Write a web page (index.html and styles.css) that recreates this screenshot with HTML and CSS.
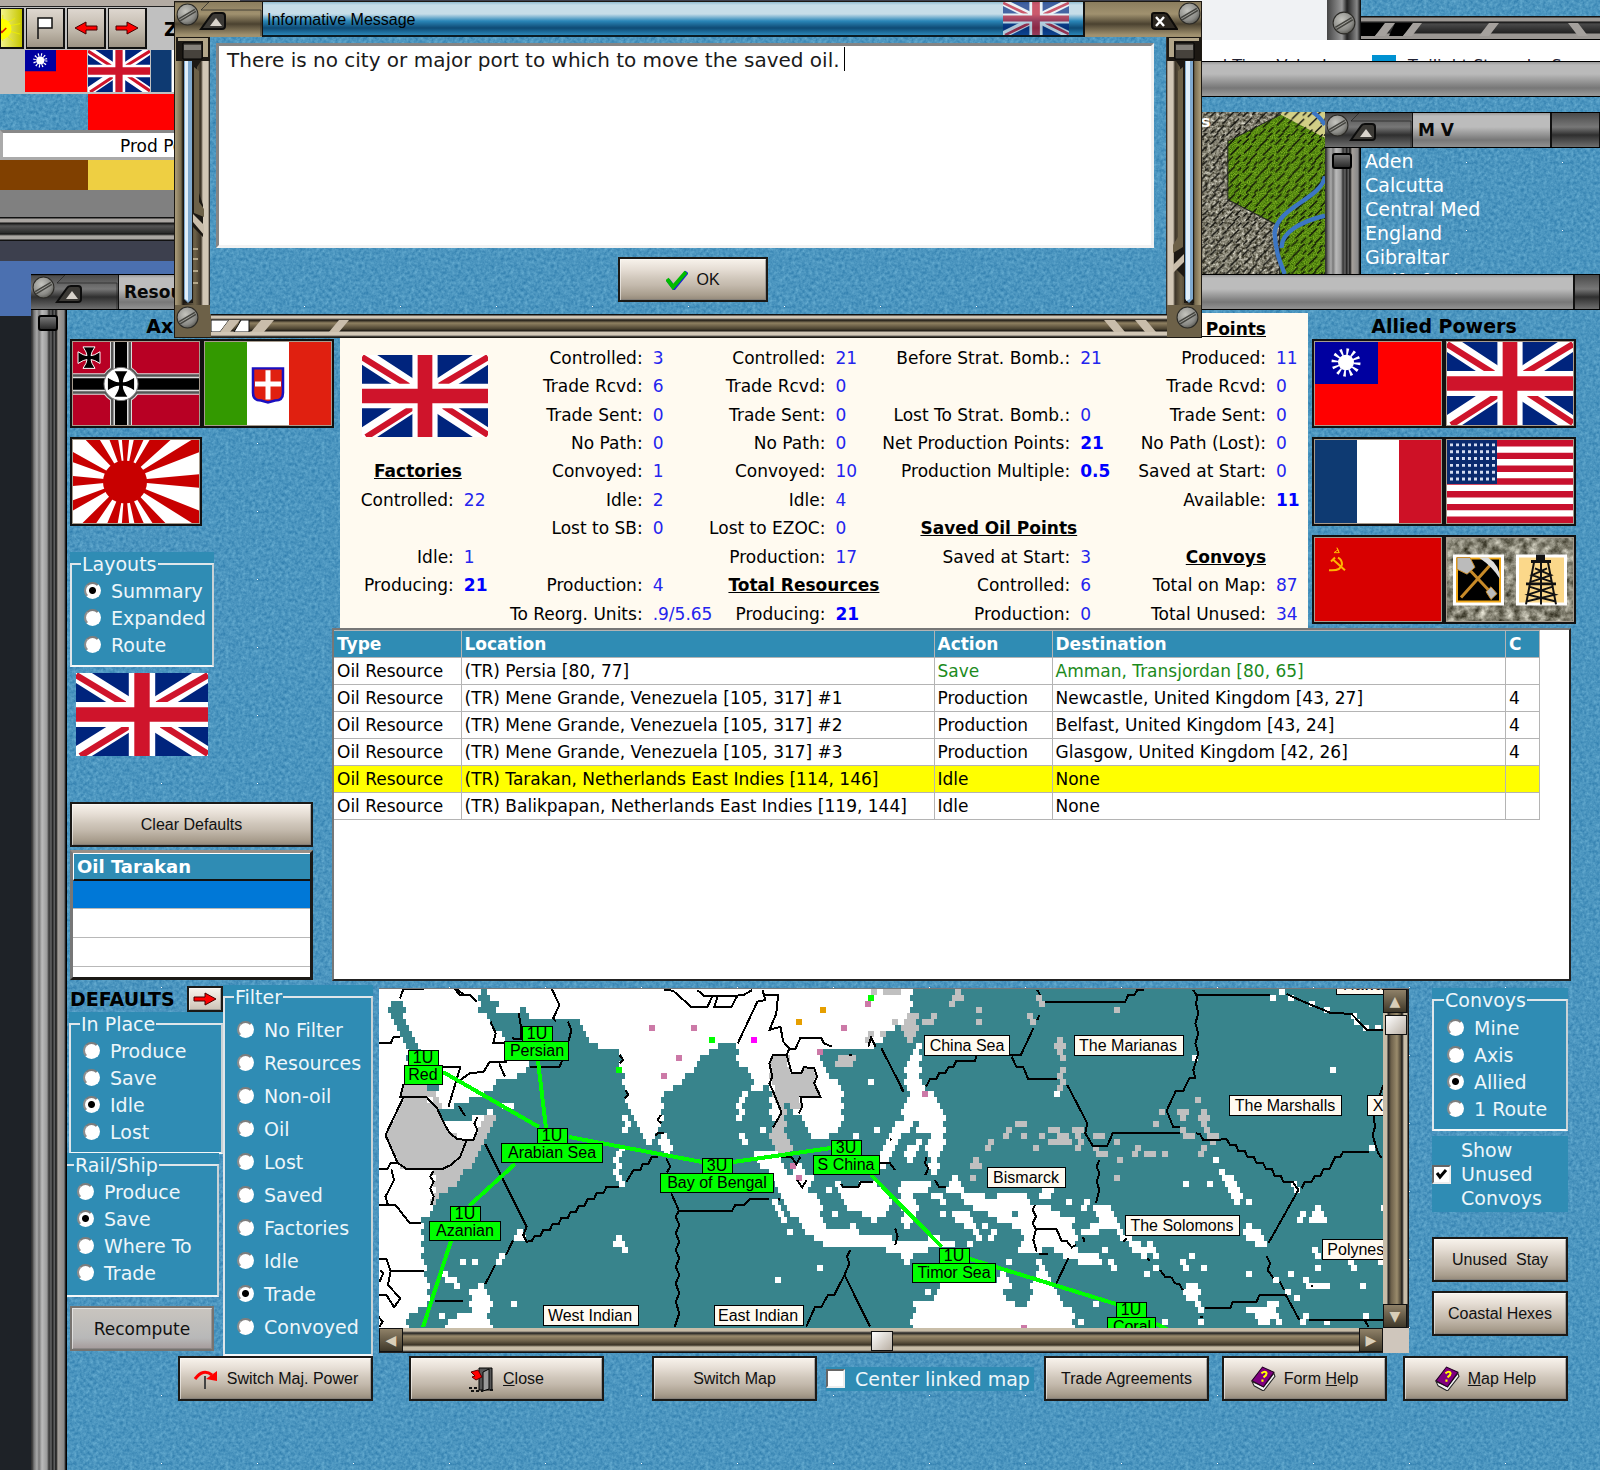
FILE: index.html
```html
<!DOCTYPE html>
<html lang="en">
<head>
<meta charset="utf-8">
<title>Resources and Production</title>
<link rel="stylesheet" href="styles.css">
</head>
<body>
<svg class="defs" width="0" height="0" aria-hidden="true">
  <defs>
    <radialGradient id="screwFill" cx=".4" cy=".35" r=".7"><stop offset="0" stop-color="#c4c4be"/><stop offset=".7" stop-color="#8a8a86"/><stop offset="1" stop-color="#55554f"/></radialGradient>
    <filter id="stone" x="0" y="0" width="100%" height="100%" color-interpolation-filters="sRGB"><feTurbulence type="fractalNoise" baseFrequency=".12" numOctaves="4"/><feColorMatrix values="1 0 0 0 .02  1 0 0 0 .01  1 0 0 0 -.05  0 0 0 0 1"/></filter>
    <filter id="grass" x="0" y="0" width="100%" height="100%" color-interpolation-filters="sRGB"><feTurbulence type="fractalNoise" baseFrequency=".3" numOctaves="3" result="n"/><feColorMatrix values=".5 0 0 0 .1  .5 0 0 0 .3  .2 0 0 0 -.03  0 0 0 0 1"/><feComposite in2="SourceGraphic" operator="in"/></filter>
    <pattern id="hatch" width="97" height="83" patternUnits="userSpaceOnUse"><path d="M2 20L20 2M30 14L42 2M52 26L76 2M84 16L95 5M6 46L30 22M40 40L52 28M62 52L88 26M4 70L16 58M24 66L44 46M50 76L70 56M78 66L94 50M12 82L26 68M36 82L46 72M74 82L90 68" stroke="#0b0b08" stroke-width="4"/></pattern>
    <symbol id="screw" viewBox="0 0 22 22"><circle cx="11" cy="11" r="10" fill="url(#screwFill)" stroke="#2b2a26"/><path d="M3 15L18 6M4 17L19 8" stroke="#44443f" stroke-width="1.4"/></symbol>
    <symbol id="cap" viewBox="0 0 88 35"><path d="M0 0H34L26 8H86V34" fill="none" stroke="#222" stroke-width="1" opacity=".7"/><use href="#screw" x="1" y="1" width="23" height="23"/><path d="M26 27L36 13Q37 11 40 11H47Q50 11 50 14V24Q50 27 47 27Z" fill="#3c3a36" stroke="#0c0c0c" stroke-width="2"/><path d="M35 24L41 16L47 24Z" fill="#d9d4cc"/></symbol>
    <symbol id="uk" viewBox="0 0 60 40" preserveAspectRatio="none"><path fill="#00247d" d="M0 0H60V40H0z"/><path d="M0 0L60 40M60 0L0 40" stroke="#fff" stroke-width="8"/><path d="M0 1L22 15M60 1L37 15M2 40L25 25M39 25L60 39" stroke="#cf142b" stroke-width="3"/><path d="M30 0V40M0 20H60" stroke="#fff" stroke-width="12"/><path d="M30 0V40M0 20H60" stroke="#cf142b" stroke-width="7"/></symbol>
    <symbol id="china" viewBox="0 0 126 85" preserveAspectRatio="none"><path fill="#f00" d="M0 0H126V85H0z"/><path fill="#0000a0" d="M0 0H63V43H0z"/><circle cx="31" cy="21" r="11" fill="none" stroke="#fff" stroke-width="7" stroke-dasharray="2.2 3.56"/><circle cx="31" cy="21" r="8" fill="#fff"/></symbol>
    <symbol id="france" viewBox="0 0 126 85" preserveAspectRatio="none"><path fill="#0e3a72" d="M0 0H42V85H0z"/><path fill="#fff" d="M42 0H84V85H42z"/><path fill="#ce1126" d="M84 0H126V85H84z"/></symbol>
    <symbol id="italy" viewBox="0 0 126 85" preserveAspectRatio="none"><path fill="#339900" d="M0 0H42V85H0z"/><path fill="#fff" d="M42 0H84V85H42z"/><path fill="#e02010" d="M84 0H126V85H84z"/><path d="M48 27H78V52Q78 60 70 60L63 62L56 60Q48 60 48 52Z" fill="#e02010" stroke="#1a0fc0" stroke-width="2.5"/><path d="M63 29V59M50 43H76" stroke="#fff" stroke-width="5"/></symbol>
    <symbol id="cross" viewBox="-12 -12 24 24"><path d="M-6 -11H6Q2 -5 2 -2Q5 -2 11 -6V6Q5 2 2 2Q2 5 6 11H-6Q-2 5 -2 2Q-5 2 -11 6V-6Q-5 -2 -2 -2Q-2 -5 -6 -11Z" fill="#000" stroke="#fff" stroke-width="1"/></symbol>
    <symbol id="germany" viewBox="0 0 126 85" preserveAspectRatio="none"><path fill="#b80024" d="M0 0H126V85H0z"/><path d="M48 0V85M0 43H126" stroke="#ddd" stroke-width="22"/><circle cx="48" cy="43" r="20" fill="#ddd"/><path d="M48 0V85M0 43H126" stroke="#555" stroke-width="20"/><circle cx="48" cy="43" r="19" fill="#555"/><path d="M48 0V85M0 43H126" stroke="#ddd" stroke-width="15"/><path d="M48 0V85M0 43H126" stroke="#000" stroke-width="12"/><circle cx="48" cy="43" r="17" fill="#fff" stroke="#777"/><use href="#cross" x="33" y="28" width="30" height="30"/><use href="#cross" x="4" y="4" width="24" height="24"/></symbol>
    <symbol id="japan" viewBox="0 0 126 85" preserveAspectRatio="none"><path fill="#fff" d="M0 0H126V85H0z"/><g fill="#c80000"><path d="M52 42L-50 52V32ZM52 42L-48 5V-15ZM52 42L-20 -35L0 -45ZM52 42L20 -45H38ZM52 42L46 -40H60ZM52 42L69 -40H88ZM52 42L100 -40L130 -30ZM52 42L150 -20V3ZM52 42L160 32V52ZM52 42L150 82V105ZM52 42L105 125H130ZM52 42L70 125H88ZM52 42L46 125H60ZM52 42L18 125H38ZM52 42L-25 120H0ZM52 42L-48 100V80Z"/><circle cx="52" cy="43" r="22"/></g></symbol>
    <symbol id="usa" viewBox="0 0 126 85" preserveAspectRatio="none"><path fill="#fff" d="M0 0H126V85H0z"/><path d="M0 3.3H126M0 16.3H126M0 29.4H126M0 42.5H126M0 55.6H126M0 68.7H126M0 81.7H126" stroke="#c8102e" stroke-width="6.5"/><path fill="#0a2a6e" d="M0 0H50V45H0z"/><path d="M3 5H49M3 12H49M3 19H49M3 26H49M3 33H49M3 40H49" stroke="#d4dcf0" stroke-width="3" stroke-dasharray="3 3"/></symbol>
    <symbol id="ussr" viewBox="0 0 126 85" preserveAspectRatio="none"><path fill="#d80000" d="M0 0H126V85H0z"/><g fill="none" stroke="#ffb400" stroke-width="2"><path d="M14 33Q26 34 27 27Q27 22 23 20M16 24L20 20M18 22L30 33"/><path d="M22 10L24 15H19L23 12L24 15Z" stroke-width="1"/></g></symbol>
    <symbol id="minor" viewBox="0 0 126 85" preserveAspectRatio="none"><path d="M0 0H126V85H0z" filter="url(#stone)"/><path fill="#fff" d="M6 17H57V69H6zM69 17H120V69H69z"/><path fill="#000" stroke="#f0a818" stroke-width="2" d="M10 21H53V65H10z"/><path d="M14 61L43 28M22 32L46 58" stroke="#c88a28" stroke-width="3"/><path d="M39 55L44 50L50 57L44 63ZM10 20H23L28 30L20 37L10 32Z" fill="#bbb" stroke="#c88a28"/><path d="M32 20H41Q53 28 53 42Q46 30 32 20Z" fill="#ddd"/><path fill="#fbd88a" d="M72 20H117V66H72z"/><path d="M89 17H98V24H89z" fill="#111"/><path d="M84 24H104M79 47H109" stroke="#111" stroke-width="3"/><path d="M87 25L79 68M101 25L109 68M88 31L104 38L84 45M100 31L85 38L105 45M83 50L108 58L79 65M105 50L81 58L109 65M94 24V68" fill="none" stroke="#111" stroke-width="2"/></symbol>
    <symbol id="i-right" viewBox="0 0 24 14"><path d="M1 5H12V1L23 7L12 13V9H1Z" fill="#f00" stroke="#400" stroke-width="1"/></symbol>
    <symbol id="i-book" viewBox="0 0 24 24"><path d="M1 15L3 19L12 24L23 10L22 7L12 20Z" fill="#f4f4f4" stroke="#222"/><path d="M1 14L11 1L22 6L12 20Z" fill="#800080" stroke="#200020"/><path d="M10 7Q14 4 15 7Q15 9 12 11M11 13V15" fill="none" stroke="#ff0" stroke-width="2"/></symbol>
  </defs>
</svg>

<div class="desktop">
  <section class="units-window" aria-label="Toolbar">
    <div class="toolbar">
      <button class="tool tool-sun" aria-label="Weather"><svg width="24" height="38" viewBox="0 0 24 38"><path d="M-4 19L16 8M-4 19L22 14M-4 19L22 26M-4 19L14 34M2 4V34" stroke="#ee0" stroke-width="1"/><circle cx="0" cy="20" r="12" fill="#ff0"/><path d="M-1 22L1 24L6 19" stroke="#d20" stroke-width="2" fill="none"/></svg></button>
      <button class="tool" aria-label="Flag"><svg width="20" height="24" viewBox="0 0 20 24"><path d="M3 23V2H17V12H3" fill="#fff" stroke="#111" stroke-width="1.5"/></svg></button>
      <button class="tool" aria-label="Previous"><svg class="flip" width="24" height="14"><use href="#i-right"/></svg></button>
      <button class="tool" aria-label="Next"><svg width="24" height="14"><use href="#i-right"/></svg></button>
      <b class="tool-text">Zoom</b>
    </div>
    <div class="mini-flags">
      <svg width="62" height="42"><use href="#china"/></svg><svg width="62" height="42"><use href="#uk"/></svg><svg width="62" height="42"><use href="#france"/></svg>
    </div>
    <div class="swatches"><i class="water"></i><i class="red"></i></div>
    <div class="prod-field">Prod Points</div>
    <div class="swatches low"><i class="brown"></i><i class="gold"></i></div>
    <div class="grey-fill"></div>
    <div class="rail"></div>
  </section>

  <section class="page-behind" aria-label="Browser">
    <div class="page-top"><div class="corner-window"><div class="corner-side"><svg width="24" height="24"><use href="#screw"/></svg></div><div class="corner-main"><div class="water"></div><div class="corner-rail"><svg width="400" height="16"><path d="M0 2H24L14 15H0zM34 2H52L42 15H28z" fill="#000"/><path d="M24 2H34L24 15H14zM52 2H61L51 15H42zM128 2H138L128 15H118zM207 2H217L227 15H217z" fill="#a5a19d"/></svg></div></div></div></div>
    <div class="page-tabs"><span>d Time Valor I</span><i class="fav"></i><span>Twilight Struggle: S</span></div>
    <div class="map-title"></div>
    <div class="map-body">
      <div class="terrain"><svg width="123" height="162" viewBox="366 337 366 486" preserveAspectRatio="none"><path d="M366 337H732V823H366z" filter="url(#stone)"/><path d="M605 337H732V415L600 345Z" fill="#d2cf86"/><path d="M443 425L600 345L732 415V823H597V680L443 600Z" filter="url(#grass)"/><path d="M366 337H732V823H366z" fill="url(#hatch)"/><path d="M443 425V600L597 680V823M443 425L600 345" fill="none" stroke="#222" stroke-width="3"/><path d="M695 337Q715 350 732 375M732 530C720 600 590 620 582 700C585 760 600 790 612 823M732 648C660 665 600 700 603 745" fill="none" stroke="#3c76c4" stroke-width="13"/></svg><b>s</b></div>
      <div class="mv-window">
        <header class="titlebar"><div class="cap"><svg width="88" height="35"><use href="#cap"/></svg></div><h2>M V</h2><div class="cap cap-end"></div></header>
        <div class="mv-body"><div class="side"><i class="knob"></i></div><ul class="mv-list"><li>Aden</li><li>Calcutta</li><li>Central Med</li><li>England</li><li>Gibraltar</li><li>Gulf of Aden</li></ul></div>
      </div>
    </div>
  </section>

  <main class="main-window">
    <header class="titlebar"><div class="cap"><svg width="88" height="35"><use href="#cap"/></svg></div><h1>Resources and Production</h1><div class="cap cap-last"></div></header>
    <div class="main-row">
      <div class="side"><i class="knob"></i></div>
      <div class="content water">
        <div class="upper">
          <div class="left-col">
            <h3 class="powers axis">Axis Powers</h3>
            <div class="flags">
              <button class="flag" aria-label="Germany"><svg><use href="#germany"/></svg></button><button class="flag" aria-label="Italy"><svg><use href="#italy"/></svg></button>
              <button class="flag" aria-label="Japan"><svg><use href="#japan"/></svg></button>
            </div>
            <div class="group layouts"><fieldset><legend>Layouts</legend>
              <label><input type="radio" name="layout" checked>Summary</label>
              <label><input type="radio" name="layout">Expanded</label>
              <label><input type="radio" name="layout">Route</label>
            </fieldset></div>
            <svg class="own-flag" width="132" height="83"><use href="#uk"/></svg>
            <button class="btn clear">Clear Defaults</button>
            <table class="oil"><thead><tr><th>Oil Tarakan</th></tr></thead><tbody><tr class="sel"><td></td></tr><tr><td></td></tr><tr><td></td></tr><tr class="cut"><td></td></tr></tbody></table>
          </div>
          <div class="right-col">
            <div class="summary-row">
              <div class="summary">
                <dl class="g1">
                  <div class="head plain">Commonwealth</div>
                  <div class="pic"><svg width="126" height="82"><use href="#uk"/></svg></div>
                  <div class="head">Factories</div>
                  <div><dt>Controlled:</dt><dd>22</dd></div><div></div>
                  <div><dt>Idle:</dt><dd>1</dd></div>
                  <div><dt>Producing:</dt><dd><b>21</b></dd></div><div></div>
                </dl>
                <dl class="g2">
                  <div class="head">Oil Resources</div>
                  <div><dt>Controlled:</dt><dd>3</dd></div>
                  <div><dt>Trade Rcvd:</dt><dd>6</dd></div>
                  <div><dt>Trade Sent:</dt><dd>0</dd></div>
                  <div><dt>No Path:</dt><dd>0</dd></div>
                  <div><dt>Convoyed:</dt><dd>1</dd></div>
                  <div><dt>Idle:</dt><dd>2</dd></div>
                  <div><dt>Lost to SB:</dt><dd>0</dd></div><div></div>
                  <div><dt>Production:</dt><dd>4</dd></div>
                  <div><dt>To Reorg. Units:</dt><dd>.9/5.65</dd></div>
                </dl>
                <dl class="g3">
                  <div class="head">Non-Oil Resources</div>
                  <div><dt>Controlled:</dt><dd>21</dd></div>
                  <div><dt>Trade Rcvd:</dt><dd>0</dd></div>
                  <div><dt>Trade Sent:</dt><dd>0</dd></div>
                  <div><dt>No Path:</dt><dd>0</dd></div>
                  <div><dt>Convoyed:</dt><dd>10</dd></div>
                  <div><dt>Idle:</dt><dd>4</dd></div>
                  <div><dt>Lost to EZOC:</dt><dd>0</dd></div>
                  <div><dt>Production:</dt><dd>17</dd></div>
                  <div class="head to-end">Total Resources</div>
                  <div><dt>Producing:</dt><dd><b>21</b></dd></div>
                </dl>
                <dl class="g4">
                  <div class="head">Production Points</div>
                  <div><dt>Before Strat. Bomb.:</dt><dd>21</dd></div><div></div>
                  <div><dt>Lost To Strat. Bomb.:</dt><dd>0</dd></div>
                  <div><dt>Net Production Points:</dt><dd><b>21</b></dd></div>
                  <div><dt>Production Multiple:</dt><dd><b>0.5</b></dd></div><div></div>
                  <div class="head">Saved Oil Points</div>
                  <div><dt>Saved at Start:</dt><dd>3</dd></div>
                  <div><dt>Controlled:</dt><dd>6</dd></div>
                  <div><dt>Production:</dt><dd>0</dd></div>
                </dl>
                <dl class="g5">
                  <div class="head to-right">Build Points</div>
                  <div><dt>Produced:</dt><dd>11</dd></div>
                  <div><dt>Trade Rcvd:</dt><dd>0</dd></div>
                  <div><dt>Trade Sent:</dt><dd>0</dd></div>
                  <div><dt>No Path (Lost):</dt><dd>0</dd></div>
                  <div><dt>Saved at Start:</dt><dd>0</dd></div>
                  <div><dt>Available:</dt><dd><b>11</b></dd></div><div></div>
                  <div class="head to-right">Convoys</div>
                  <div><dt>Total on Map:</dt><dd>87</dd></div>
                  <div><dt>Total Unused:</dt><dd>34</dd></div>
                </dl>
              </div>
              <div class="allied">
                <h3 class="powers">Allied Powers</h3>
                <div class="flags">
                  <button class="flag" aria-label="China"><svg><use href="#china"/></svg></button><button class="flag" aria-label="Commonwealth"><svg><use href="#uk"/></svg></button>
                  <button class="flag" aria-label="France"><svg><use href="#france"/></svg></button><button class="flag" aria-label="United States"><svg><use href="#usa"/></svg></button>
                  <button class="flag" aria-label="Soviet Union"><svg><use href="#ussr"/></svg></button><button class="flag" aria-label="Minor countries"><svg><use href="#minor"/></svg></button>
                </div>
              </div>
            </div>
            <div class="grid-box">
              <table class="routes">
                <colgroup><col class="c-type"><col class="c-loc"><col class="c-act"><col><col class="c-c"></colgroup>
                <thead><tr><th>Type</th><th>Location</th><th>Action</th><th>Destination</th><th>C</th></tr></thead>
                <tbody>
                  <tr><td>Oil Resource</td><td>(TR) Persia [80, 77]</td><td class="saved">Save</td><td class="saved">Amman, Transjordan [80, 65]</td><td></td></tr>
                  <tr><td>Oil Resource</td><td>(TR) Mene Grande, Venezuela [105, 317] #1</td><td>Production</td><td>Newcastle, United Kingdom [43, 27]</td><td>4</td></tr>
                  <tr><td>Oil Resource</td><td>(TR) Mene Grande, Venezuela [105, 317] #2</td><td>Production</td><td>Belfast, United Kingdom [43, 24]</td><td>4</td></tr>
                  <tr><td>Oil Resource</td><td>(TR) Mene Grande, Venezuela [105, 317] #3</td><td>Production</td><td>Glasgow, United Kingdom [42, 26]</td><td>4</td></tr>
                  <tr class="current"><td>Oil Resource</td><td>(TR) Tarakan, Netherlands East Indies [114, 146]</td><td>Idle</td><td>None</td><td></td></tr>
                  <tr><td>Oil Resource</td><td>(TR) Balikpapan, Netherlands East Indies [119, 144]</td><td>Idle</td><td>None</td><td></td></tr>
                </tbody>
              </table>
            </div>
          </div>
        </div>

        <div class="lower">
          <div class="defaults">
            <div class="defaults-head"><b>DEFAULTS</b><button class="btn arrow" aria-label="Apply defaults"><svg width="24" height="14"><use href="#i-right"/></svg></button></div>
            <div class="group in-place"><fieldset><legend>In Place</legend>
              <label><input type="radio" name="place">Produce</label>
              <label><input type="radio" name="place">Save</label>
              <label><input type="radio" name="place" checked>Idle</label>
              <label><input type="radio" name="place">Lost</label>
            </fieldset></div>
            <div class="group rail-ship"><fieldset><legend>Rail/Ship</legend>
              <label><input type="radio" name="rail">Produce</label>
              <label><input type="radio" name="rail" checked>Save</label>
              <label><input type="radio" name="rail">Where To</label>
              <label><input type="radio" name="rail">Trade</label>
            </fieldset></div>
            <button class="btn recompute">Recompute</button>
          </div>
          <div class="group filter"><fieldset><legend>Filter</legend>
            <label><input type="radio" name="filter">No Filter</label>
            <label><input type="radio" name="filter">Resources</label>
            <label><input type="radio" name="filter">Non-oil</label>
            <label><input type="radio" name="filter">Oil</label>
            <label><input type="radio" name="filter">Lost</label>
            <label><input type="radio" name="filter">Saved</label>
            <label><input type="radio" name="filter">Factories</label>
            <label><input type="radio" name="filter">Idle</label>
            <label><input type="radio" name="filter" checked>Trade</label>
            <label><input type="radio" name="filter">Convoyed</label>
          </fieldset></div>
          <div class="map">
            <svg class="map-view" role="img" aria-label="Convoy map">
              <rect width="100%" height="100%" fill="#38848c"/>
              <g id="land" shape-rendering="crispEdges"></g>
              <g fill="none" stroke="#000" shape-rendering="crispEdges">
                <g class="borders" transform="translate(-9 -9) scale(.34435 .33333)">
                  <path d="M157 27H97L87 55M25 190H60L68 172H88M247 27L260 45H290L310 66M250 27L275 45M528 27L550 75L532 115L540 125M432 100L440 150M350 125L365 160L358 190H395M575 125L585 150L570 210L550 262H465M212 262H262L228 380M262 300L290 280L330 275L348 245H398M375 250L392 290M412 175L438 178L440 150M258 378L276 408"/>
                  <path d="M97 313L88 350L165 352L195 385L215 430L232 460L255 478L300 480L312 450L303 430L312 412M97 352L45 465L80 548L107 568H208L235 555L262 530L280 482M25 568H50L60 548H80M62 568L70 600L45 650L52 675M25 676H75L115 729H148M185 572L175 590L185 605L175 625L185 650L178 676M25 838H48L60 873H157M60 873L52 915L88 955L70 982L48 945H25M30 870L38 880L28 905M25 1010L36 1025L28 1040M188 964H270"/>
                  <path d="M335 492L455 740L445 765L455 785L470 783L478 768H495L503 750H522L530 732H548L556 713H575L582 696H598L606 678H622L632 658H650L658 640H678L686 622H722M745 605L765 570H785L792 552H808L818 532H835M415 782L395 825M363 855L335 912M725 225L735 240L725 250M742 330L750 345L740 355M845 405L835 420L845 430M828 468L835 460H855M860 535L872 560L862 578M875 640L897 692H1052L1060 676H1085L1102 658H1160M897 692L888 710L898 735L888 760L898 785L888 810L898 835L888 860L898 885L888 910L898 940L888 965L898 1000L885 1040M1188 655L1190 662"/>
                  <path d="M855 30L880 32L932 80H980L995 47M950 30L970 47H1065L1085 45L1110 30M1010 47L1000 80H1050L1067 47M1140 30L1148 60L1125 65L1068 190M1148 45H1185L1180 100L1160 150L1192 140L1200 185L1218 205L1235 208L1250 173H1310L1318 190L1342 200M1218 205L1210 226H1170L1160 250L1168 290L1160 310L1175 345L1195 398L1170 443M1210 226L1225 280H1252L1260 262L1290 264L1298 290L1290 310L1308 350H1250L1255 380L1245 400M1447 200L1455 172L1468 200M1485 205L1550 335M1390 225H1400M1195 532H1225L1238 552L1250 530M1240 600L1255 622L1268 600M1368 612L1375 622H1418L1425 605H1460M1480 550H1510L1525 570M1525 745L1532 770L1525 795M1395 810L1385 830L1392 850L1378 885L1348 945H1330L1310 982H1292L1267 1040M1378 885L1452 1040M1510 478L1515 480"/>
                </g>
                <g class="borders" transform="translate(521 -9) scale(.33333)">
                  <path d="M435 66H675L685 45H703L712 30H732M412 30L420 45M418 105L412 120M400 145L362 226H230L225 243L168 244L160 262H145L135 280H117L108 298H90L78 320M335 230L350 262H370L385 298H470M502 315L562 430L556 460L578 497H622L638 460H840M880 30L892 50L888 70L895 100L886 130L895 160L886 190L895 220L880 270L886 295H868L850 332H828L800 392L820 442H840M892 46H1110M1160 42L1210 65L1290 98L1355 102L1400 150H1450M888 460L900 463L910 480L980 478L990 495H1008L1015 514H1035L1043 532H1062L1070 550H1090L1098 568H1116L1124 587H1142L1150 605H1178L1195 630L1105 790M1205 625L1215 605H1235L1245 587H1262L1270 568H1288L1305 532H1320L1330 515H1408M1450 315L1420 400L1425 440L1418 465L1425 490L1435 520L1445 535"/>
                  <path d="M598 540L590 560L598 580L590 605L598 630L588 668M80 530L75 550L85 565L76 585M105 600L118 622H138M0 315L8 335M405 675L398 690L408 710L398 730L408 748H470L485 783H500L515 802L528 795M408 748L400 780L410 815M418 821H445M550 772L552 785M505 835L468 912M670 785L680 775M742 835L748 842M780 870L795 890L815 893L825 910L838 912L848 930M915 983H992L998 965H1070L1078 946H1158L1198 1020M1100 828L1110 850L1103 870L1120 895M1140 905L1152 930M1228 1019H1450M1395 1022L1405 1040M900 1010H908M1232 918H1240"/>
                </g>
              </g>
              <path class="routes-line" d="M64 83L160 138M159 72L167 139M190 148L323 173M354 173L452 159M492 186L563 258M591 270L737 315M777 335L790 341M136 175L90 217M72 252L44 338"/>
              <g class="sea">
                <rect x="164" y="316" width="95" height="20"/><text x="211" y="332">West Indian</text>
                <rect x="335" y="316" width="89" height="20"/><text x="379" y="332">East Indian</text>
                <rect x="545" y="46" width="85" height="20"/><text x="588" y="62">China Sea</text>
                <rect x="695" y="46" width="109" height="20"/><text x="749" y="62">The Marianas</text>
                <rect x="850" y="106" width="112" height="20"/><text x="906" y="122">The Marshalls</text>
                <rect x="988" y="106" width="40" height="20"/><text x="999" y="122">X</text>
                <rect x="608" y="178" width="78" height="20"/><text x="647" y="194">Bismarck</text>
                <rect x="746" y="226" width="114" height="20"/><text x="803" y="242">The Solomons</text>
                <rect x="943" y="250" width="82" height="20"/><text x="983" y="266">Polynesia</text>
                <rect x="957" y="-15" width="80" height="20"/><text x="997" y="1">Hawaiian</text>
              </g>
              <g class="convoy">
                <rect x="29" y="61" width="30" height="15"/><text x="44" y="74">1U</text><rect x="25" y="76" width="38" height="19"/><text x="44" y="91">Red</text>
                <rect x="143" y="37" width="30" height="15"/><text x="158" y="50">1U</text><rect x="125" y="52" width="64" height="19"/><text x="158" y="67">Persian</text>
                <rect x="158" y="139" width="30" height="15"/><text x="173" y="152">1U</text><rect x="122" y="154" width="101" height="19"/><text x="173" y="169">Arabian Sea</text>
                <rect x="323" y="169" width="30" height="15"/><text x="338" y="182">3U</text><rect x="281" y="184" width="113" height="19"/><text x="338" y="199">Bay of Bengal</text>
                <rect x="452" y="151" width="30" height="15"/><text x="467" y="164">3U</text><rect x="434" y="166" width="66" height="19"/><text x="467" y="181">S China</text>
                <rect x="71" y="217" width="30" height="15"/><text x="86" y="230">1U</text><rect x="50" y="232" width="71" height="19"/><text x="86" y="247">Azanian</text>
                <rect x="560" y="259" width="30" height="15"/><text x="575" y="272">1U</text><rect x="533" y="274" width="83" height="19"/><text x="575" y="289">Timor Sea</text>
                <rect x="737" y="313" width="30" height="15"/><text x="752" y="326">1U</text><rect x="728" y="328" width="48" height="19"/><text x="753" y="343">Coral</text>
              </g>
            </svg>
            <div class="vscroll"><button aria-label="Up">▲</button><div class="track"><i class="thumb"></i></div><button aria-label="Down">▼</button></div>
            <div class="hscroll"><button aria-label="Left">◀</button><div class="track"><i class="thumb"></i></div><button aria-label="Right">▶</button></div>
            <div class="scroll-corner"></div>
          </div>
          <div class="convoy-col">
            <div class="group"><fieldset><legend>Convoys</legend>
              <label><input type="radio" name="convoys">Mine</label>
              <label><input type="radio" name="convoys">Axis</label>
              <label><input type="radio" name="convoys" checked>Allied</label>
              <label><input type="radio" name="convoys">1 Route</label>
            </fieldset></div>
            <label class="check show"><input type="checkbox" checked><span>Show Unused Convoys</span></label>
            <button class="btn stay">Unused&nbsp; Stay</button>
            <button class="btn">Coastal Hexes</button>
          </div>
        </div>

        <div class="actions">
          <button class="btn wide"><svg width="26" height="22" viewBox="0 0 26 22"><path d="M2 11Q10 0 19 7" fill="none" stroke="#f00" stroke-width="3"/><path d="M13 11L24 3V13Z" fill="#f00"/><path d="M12 8V21" stroke="#444" stroke-width="2"/></svg>Switch Maj. Power</button>
          <button class="btn wide close"><svg width="26" height="26" viewBox="0 0 26 26"><path d="M10 2H23V24H10z" fill="#555" stroke="#000"/><path d="M14 6L20 3V23L14 25Z" fill="#999" stroke="#000"/><path d="M2 6L9 4L13 11L7 14L3 11L6 10Z" fill="#f00" stroke="#500"/><path d="M0 22H10M2 25H14M21 24H26" stroke="#111" stroke-width="2" stroke-dasharray="3 2"/></svg><span><u>C</u>lose</span></button>
          <button class="btn switch-map">Switch Map</button>
          <label class="check center"><input type="checkbox"><span>Center linked map</span></label>
          <button class="btn trade">Trade Agreements</button>
          <button class="btn form"><svg width="25" height="25"><use href="#i-book"/></svg><span>Form <u>H</u>elp</span></button>
          <button class="btn maphelp"><svg width="25" height="25"><use href="#i-book"/></svg><span><u>M</u>ap Help</span></button>
        </div>
      </div>
    </div>
  </main>

  <section class="dialog" role="dialog" aria-labelledby="dlg-title">
    <header class="dlg-title">
      <div class="cap"><svg width="88" height="35"><use href="#cap"/></svg></div>
      <h2 id="dlg-title">Informative Message</h2>
      <svg class="title-flag" width="66" height="33"><use href="#uk"/></svg>
      <div class="cap cap-x"><button aria-label="Close message"><svg width="28" height="19" viewBox="0 0 28 19"><path d="M2 3Q2 1 4 1H14Q17 1 18 3L27 17H6Q2 17 2 14Z" fill="#2d2821" stroke="#0c0a08" stroke-width="2"/><path d="M6 5L14 14M14 5L6 14" stroke="#fff" stroke-width="2.4"/></svg></button><svg width="23" height="23"><use href="#screw"/></svg></div>
    </header>
    <div class="dlg-row">
      <div class="dlg-side"><svg class="pillar-top" width="36" height="277" viewBox="0 0 36 277"><path d="M1 0H35V24H26L22 30V150L28 168V200L18 190V266H8V24H1Z" fill="#1c1813"/><path d="M3 1H33V20H28V4H3Z" fill="#b3a689"/><path d="M8 6H27V22H8Z" fill="#46423c" stroke="#000"/><path d="M9 8H26V13H9Z" fill="#85817a"/><path d="M9 24H17V262L13 266L9 262Z" fill="#7fa9cf"/><path d="M10 24H13V264L10 262Z" fill="#e2effa"/><path d="M19 30L24 34V165L29 172V180L19 176Z" fill="#6d6148"/><path d="M18 177L29 188V198L18 185Z" fill="#c9bdab"/><path d="M18 212H23M18 222H23M18 234H23M18 246H23" stroke="#b3a689" stroke-width="2"/></svg></div>
      <div class="dlg-body water">
        <textarea aria-label="Message">There is no city or major port to which to move the saved oil.</textarea><i class="caret"></i>
        <button class="btn ok"><svg width="22" height="20" viewBox="0 0 22 20"><path d="M2 10L8 18L21 2" fill="none" stroke="#1a1ae0" stroke-width="4"/><path d="M1 9L7 17L20 2" fill="none" stroke="#0b0" stroke-width="4"/></svg>OK</button>
      </div>
      <div class="dlg-side dlg-right"><svg class="pillar-top mirror" width="36" height="277" viewBox="0 0 36 277"><path d="M1 0H35V24H26L22 30V200L28 208V230L18 240V266H8V24H1Z" fill="#1c1813"/><path d="M3 1H33V20H28V4H3Z" fill="#b3a689"/><path d="M8 6H27V22H8Z" fill="#46423c" stroke="#000"/><path d="M9 8H26V13H9Z" fill="#85817a"/><path d="M9 24H17V262L13 266L9 262Z" fill="#7fa9cf"/><path d="M12 24H16V264L12 262Z" fill="#e2effa"/><path d="M19 30L24 34V200L29 208V216L19 210Z" fill="#6d6148"/><path d="M18 217L29 228V236L18 225Z" fill="#c9bdab"/></svg></div>
    </div>
    <footer class="dlg-foot">
      <svg class="foot-screw" width="36" height="32"><use href="#screw" x="1" y="1" width="23" height="23"/></svg>
      <div class="foot-rail"><svg width="150" height="12"><path d="M0 0H18L9 12H0zM30 0H38V12H23z" fill="#fff" stroke="#111"/><path d="M18 0H29L19 12H9zM50 0H63L53 12H40zM128 0H138L128 12H118z" fill="#c9bdab"/></svg><svg width="80" height="12"><path d="M17 0H28L38 12H27zM48 0H59L69 12H58z" fill="#c9bdab"/></svg></div>
      <svg class="foot-screw" width="34" height="32"><use href="#screw" x="9" y="1" width="23" height="23"/></svg>
    </footer>
  </section>
</div>
<script src="map.js"></script>
</body>
</html>
```
FILE: styles.css
```css
:root {
  --ui: "DejaVu Sans", Verdana, sans-serif;
  --btn: "Liberation Sans", Arial, sans-serif;
  --panel: #2f8cb4;
  --noise: url("data:image/svg+xml,%3Csvg xmlns='http://www.w3.org/2000/svg' width='96' height='68'%3E%3Cfilter id='n' x='0' y='0' width='100%25' height='100%25' color-interpolation-filters='sRGB'%3E%3CfeTurbulence type='fractalNoise' baseFrequency='.3' numOctaves='3' stitchTiles='stitch'/%3E%3CfeColorMatrix values='.28 0 0 0 .155 .24 0 0 0 .465 .18 0 0 0 .66 0 0 0 0 1'/%3E%3C/filter%3E%3Crect width='96' height='68' filter='url(%23n)'/%3E%3Crect x='94' y='65' width='1' height='1' fill='white'/%3E%3C/svg%3E");
}
* { box-sizing: border-box; }
body { margin: 0; font-family: var(--ui); font-size: 17px; color: #000; background: #1e2227; }
h1, h2, h3, dl, dd, ul { margin: 0; padding: 0; }
button, input, textarea { font: inherit; color: inherit; margin: 0; }
.defs { position: absolute; }
.desktop { position: relative; min-height: 100vh; overflow: hidden; background: linear-gradient(#3d404e 261px, #4b70b0 261px, #4b70b0 316px, #1e2227 316px); }
.water { background: #4b94bf var(--noise); }

/* toolbar window, top left */
.units-window { position: absolute; left: 0; top: 0; width: 240px; overflow: hidden; background: #c0c0c0; border-top: 6px solid #b3aba3; }
.toolbar { display: flex; align-items: center; height: 44px; gap: 2px; border-top: 1px solid #222; }
.tool { width: 39px; height: 41px; padding: 0; border: 1px solid #111; border-right-width: 2px; border-bottom-width: 2px; background: linear-gradient(#ded7cf, #bdb5a8 60%, #9d9384); display: flex; align-items: center; justify-content: center; }
.tool-sun { width: 24px; background: linear-gradient(90deg, #f4f48a, #c6c600); }
.tool-text { margin-left: 15px; font-size: 19px; }
.flip { transform: scaleX(-1); }
.mini-flags { display: flex; padding-left: 25px; height: 44px; gap: 1px; }
.mini-flags svg { flex: none; }
.swatches { display: flex; height: 36px; }
.swatches i { flex: none; width: 88px; }
.swatches i + i { width: 152px; }
.swatches.low { height: 30px; }
.red { background: #f00; }
.brown { background: #804000; }
.gold { background: #eecf42; }
.prod-field { height: 30px; line-height: 26px; padding-left: 117px; background: #fff; border: 3px solid #aaa; border-top-color: #888; }
.grey-fill { height: 27px; background: #808080; }
.rail { height: 24px; background: linear-gradient(#111 1px, #aaa6a2 2px 5px, #111 6px, #555 9px, #2a2a2a 16px, #111 17px, #aaa6a2 19px 22px, #111 23px); }

/* windows, top right */
.page-behind { position: absolute; left: 1180px; right: 0; top: 0; height: 280px; overflow: hidden; background: #fff; }
.page-top { height: 40px; background: #f0f2f4; padding-left: 147px; }
.corner-window { display: flex; height: 40px; background: #333; }
.corner-side { width: 34px; padding: 11px 5px 0; background: linear-gradient(90deg, #444, #999 15px, #222 20px, #888 30px, #000); }
.corner-main { flex: 1; overflow: hidden; border-bottom: 1px solid #000; }
.corner-main .water { height: 16px; }
.corner-rail { height: 24px; padding-top: 5px; background: linear-gradient(#111 1px, #9b9793 2px 5px, #111 6px, #4a4a4a 8px, #222 17px, #9b9793 18px 22px); }
.corner-rail svg { display: block; }
.page-tabs { display: flex; height: 21px; overflow: hidden; padding: 15px 0 0 37px; line-height: 22px; color: #223; font-size: 16px; }
.page-tabs span { white-space: nowrap; }
.page-tabs span:first-child { width: 155px; flex: none; }
.page-tabs .fav { flex: none; width: 24px; height: 24px; margin-right: 12px; background: #0092d2; }
.map-title { height: 36px; border: solid #000; border-width: 1px 0; background: linear-gradient(#999, #bababa 3px 12px, #777 26px, #999 33px); }
.map-body { display: flex; height: 183px; padding-top: 15px; background: #4b94bf var(--noise); }
.terrain { position: relative; flex: none; width: 145px; padding-left: 22px; overflow: hidden; }
.terrain b { position: absolute; left: 21px; top: 0; color: #fff; font-size: 16px; }
.mv-window { flex: 1; min-width: 0; overflow: hidden; }
.mv-body { display: flex; }
.mv-list { list-style: none; flex: 1; padding: 1px 0 0 4px; color: #fff; font-size: 19px; line-height: 24px; }

/* grey window frame */
.titlebar { display: flex; height: 36px; border: solid #000; border-width: 1px 0; background: linear-gradient(#999, #bcbcbc 3px 14px, #777 27px, #8e8e8e 33px); }
.titlebar h1, .titlebar h2 { flex: 1; padding-left: 5px; font-size: 17px; line-height: 34px; color: #080808; }
.cap { flex: none; width: 88px; background: linear-gradient(#4a4a4a, #777 14px, #2f2f2f 22px, #6e6e6e 34px); border-right: 1px solid #111; }
.cap svg { display: block; }
.cap-end { width: 50px; border-left: 2px solid #111; }
.cap-last { width: 27px; border-left: 2px solid #111; }
.side { flex: none; width: 36px; padding: 5px 7px; background: linear-gradient(90deg, #333 1px, #777 3px, #aaa 6px, #777 8px, #bbb 11px, #999 16px, #333 18px, #666 20px, #111 22px, #777 23px, #111 25px, #a5a09a 27px, #888 33px, #000 35px); }
.knob { display: block; width: 20px; height: 16px; border: 2px solid #000; border-radius: 3px; background: linear-gradient(#777, #2a2a2a); }

/* main window */
.main-window { position: absolute; left: 31px; right: 0; top: 274px; bottom: 0; min-height: 1196px; display: flex; flex-direction: column; }
.main-window > .titlebar { flex: none; }
.main-row { flex: 1; display: flex; }
.content { flex: 1; min-width: 0; }
.upper { display: flex; padding-right: 24px; }
.left-col { flex: none; width: 265px; padding-left: 3px; }
.powers { height: 29px; line-height: 32px; font-size: 19px; text-align: center; }
.axis { padding-left: 20px; }
.flags { display: grid; grid-template-columns: 132px 132px; row-gap: 9px; }
.flag { display: block; height: 89px; padding: 1px; border: 2px solid #111; background: #a79c8e; }
.flag svg { display: block; width: 100%; height: 100%; }
.group { background: var(--panel); color: #eef6fa; font-size: 19px; }
.group fieldset { margin: 0; min-width: 0; padding: 1px 0 7px 12px; border: 2px solid #dfe6ea; border-right-color: #c9d2d6; border-bottom-color: #f4f7f8; }
.group legend { padding: 0 1px; line-height: 24px; margin-left: -3px; }
.group label { display: flex; align-items: center; gap: 10px; height: 27px; white-space: nowrap; }
input[type=radio] { appearance: none; flex: none; width: 17px; height: 17px; border-radius: 50%; border: 2px solid #fff; border-top-color: #7d7d7d; border-left-color: #8d8d8d; background: #fff; }
input[type=radio]:checked { background: radial-gradient(circle, #000 3px, #fff 4px); }
.layouts { width: 144px; margin-top: 26px; }
.own-flag { display: block; margin: 6px 0 0 6px; }
.btn { display: flex; align-items: center; justify-content: center; gap: 8px; height: 45px; padding: 0 4px; border: 2px solid #1b1916; border-radius: 0; font: 16px var(--btn); color: #111; white-space: nowrap; background: linear-gradient(#f8f3ec, #e6ded5 10px, #cfc6ba 20px, #c4baad 26px, #a99e8e 36px, #94897a); box-shadow: inset 1px 1px #fff8, inset -1px -1px #7778; }
.clear { width: 243px; margin-top: 46px; }
.oil { width: 243px; height: 130px; margin-top: 3px; border: 3px solid #1b1916; border-top-color: #998f86; border-left-color: #777; border-collapse: separate; border-spacing: 0; background: #fff; table-layout: fixed; }
.oil th { height: 28px; padding: 0 3px; text-align: left; font-size: 18px; line-height: 25px; color: #fff; background: var(--panel); border: 1px solid #fff; border-bottom: 2px solid #111; border-right: 0; }
.oil td { height: 29px; padding: 0; border-bottom: 1px solid #b8b8b8; }
.oil .sel td { height: 28px; background: #0078d7; }
.oil .cut td { height: auto; border: 0; }
.right-col { flex: 1; min-width: 0; }
.summary-row { display: flex; padding-top: 3px; gap: 4px; }
.summary { flex: 1; min-width: 0; margin-left: 8px; height: 315px; padding-top: 2px; display: grid; grid-template-columns: 156fr 207fr 177fr 239fr 190fr; background: #fffaf0; }
.summary dl { display: grid; grid-template-columns: minmax(0, 1fr); grid-template-rows: repeat(11, 1fr); min-width: 0; white-space: nowrap; }
.summary dl > div { display: flex; gap: 10px; align-items: center; justify-content: flex-end; min-height: 0; }
.summary dd { flex: none; color: #2424ee; }
.summary dd b { color: #0000ff; }
.g1 dd { width: 32px; }
.g2 dd { width: 50px; }
.g3 dd { width: 44px; }
.g4 dd { width: 38px; }
.g5 dd { width: 32px; }
.summary dl > .head { justify-content: center; font-weight: bold; text-decoration: underline; }
.summary dl > .plain { justify-content: flex-start; padding-left: 14px; font-size: 19px; text-decoration: none; }
.g2 > .head { padding-left: 8px; }
.summary dl > .to-end { justify-content: flex-end; }
.summary .g1 .pic { grid-row: span 4; padding-right: 8px; align-items: flex-start; padding-top: 12px; }
.summary dl > .to-right { justify-content: flex-end; padding-right: 42px; }
.allied .powers { margin-top: -3px; }
.grid-box { height: 353px; margin-right: 5px; border: 2px solid #777; border-bottom-color: #222; border-right-color: #222; background: #fff; overflow: hidden; }
.routes { width: calc(100% - 29px); border-collapse: collapse; table-layout: fixed; }
.c-type { width: 127px; }
.c-loc { width: 473px; }
.c-act { width: 118px; }
.c-c { width: 34px; }
.routes th, .routes td { height: 27px; padding: 0 3px; line-height: 25px; text-align: left; white-space: nowrap; border: 1px solid #b4b4b4; }
.routes th { color: #fff; background: var(--panel); }
.routes tr > :first-child { border-left: 0; }
.current { background: #ff0; }
.saved { color: #1c8a1c; }

/* lower part */
.lower { display: flex; padding: 4px 32px 0 0; }
.summary-row, .lower { align-items: flex-start; }
.defaults { flex: none; width: 156px; }
.defaults-head { display: flex; align-items: center; justify-content: space-between; height: 27px; padding-left: 3px; font-size: 19px; }
.arrow { width: 36px; height: 26px; padding: 0; }
.in-place { margin-left: 2px; }
.rail-ship { width: 152px; margin-top: -1px; }
.rail-ship fieldset { padding-left: 10px; padding-bottom: 9px; border-left: 0; }
.recompute { width: 144px; margin: 9px 0 0 3px; border-color: #77736f; font: 17px var(--ui); background: linear-gradient(#c9c5bf, #b8b8b8 30px, #a59b9b); }
.filter { flex: none; width: 150px; }
.filter fieldset { padding: 4px 0 11px 12px; }
.filter label { height: 33px; }
.map { flex: 1; min-width: 0; margin: 3px 0 0 6px; display: grid; grid-template-columns: 1fr 26px; grid-template-rows: 339px 25px; border-top: 1px solid #777; }
.map-view { width: 100%; height: 339px; display: block; }
.borders path { stroke-width: 2px; vector-effect: non-scaling-stroke; }
.routes-line { fill: none; stroke: #0f0; stroke-width: 4px; shape-rendering: crispEdges; }
.map-view text { font: 16px var(--btn); text-anchor: middle; }
.sea rect { fill: #fffaf0; stroke: #000; stroke-width: 1px; shape-rendering: crispEdges; }
.convoy rect { fill: #0f0; stroke: #000; stroke-width: 1px; shape-rendering: crispEdges; }
.vscroll, .hscroll { display: flex; background: #222; }
.vscroll { flex-direction: column; }
.vscroll button, .hscroll button { flex: none; width: 24px; height: 24px; padding: 0; border: 1px solid #111; font: 14px var(--ui); line-height: 20px; color: #d9ceb8; background: linear-gradient(#8f8168, #3f3829); }
.track { flex: 1; display: flex; }
.vscroll .track { flex-direction: column; padding: 2px; background: linear-gradient(90deg, #c8bda8 4px, #222 5px, #6c604a 8px, #9a8b6c 14px, #4a4233 18px, #111 19px, #c8bda8 21px 24px, #111 25px); }
.hscroll .track { align-items: center; background: linear-gradient(#c8bda8 3px, #222 5px, #9a8b6c 8px, #6c604a 13px, #3a3326 17px, #c8bda8 19px 22px, #111 24px); }
.thumb { width: 22px; height: 20px; border: 1px solid #111; background: linear-gradient(135deg, #fff, #b8aea2); }
.hscroll .thumb { margin-left: 49%; }
.scroll-corner { background: #cfc6bc; }
.convoy-col { flex: none; width: 136px; margin: 3px 0 0 23px; }
.convoy-col .group fieldset { padding: 2px 0 7px 13px; }
.check { display: flex; align-items: center; background: var(--panel); color: #eef6fa; font-size: 19px; line-height: 24px; }
input[type=checkbox] { appearance: none; flex: none; width: 19px; height: 19px; background: #fff; border: 2px solid #eee; border-top-color: #666; border-left-color: #666; }
input[type=checkbox]:checked { background: #fff url("data:image/svg+xml,%3Csvg xmlns='http://www.w3.org/2000/svg' viewBox='0 0 15 15'%3E%3Cpath d='M3 6L6 10L12 3' fill='none' stroke='black' stroke-width='3'/%3E%3C/svg%3E"); }
.show { height: 76px; margin: 5px 0 25px; gap: 10px; }
.btn.stay { margin-bottom: 9px; }
.convoy-col .btn { width: 100%; }
.actions { display: flex; padding: 0 32px 0 111px; align-items: center; }
.actions .btn { flex: 1 1 165px; min-width: 0; }
.actions .wide { flex-basis: 195px; }
.actions .close { margin-left: 36px; }
.actions .switch-map { margin-left: 48px; }
.center { flex: none; width: 208px; margin: 0 10px 0 9px; gap: 10px; white-space: nowrap; }
.actions .form { margin: 0 16px 0 13px; }

/* message dialog */
.dialog { position: absolute; left: 174px; top: 1px; width: 1028px; border: 1px solid #1d1913; background: #6d6148; }
.dlg-title { display: flex; height: 35px; background: linear-gradient(#8fbcd2, #c6dde8 3px 12px, #2a86b8 19px, #0e4a74 26px, #2a86b8 33px); border-bottom: 2px solid #0a1a22; }
.dlg-title h2 { flex: 1; padding-left: 4px; font: 16px var(--btn); line-height: 35px; }
.dialog .cap { height: 35px; background: linear-gradient(#8b7d5e, #a0916f 12px, #4b4230 22px, #a0916f 33px); }
.title-flag { opacity: .65; margin-right: 14px; }
.dialog .cap-x { display: flex; width: 118px; justify-content: flex-end; border-left: 2px solid #111; border-right: 0; }
.cap-x button { margin-top: 9px; padding: 0; border: 0; background: none; height: 20px; }
.dlg-row { display: flex; }
.dlg-side { flex: none; width: 35px; overflow: hidden; background: linear-gradient(90deg, #a59776 1px, #7a6d50 6px, #1c1813 8px, #6d6148 20px, #3c3428 26px, #d2c7b6 28px 33px, #000 35px); }
.pillar-top { display: block; }
.mirror { transform: scaleX(-1); }
.dlg-right { background: linear-gradient(270deg, #a59776 1px, #7a6d50 6px, #1c1813 8px, #6d6148 20px, #3c3428 26px, #d2c7b6 28px 33px, #000 35px); }
.dlg-body { flex: 1; position: relative; padding: 6px 12px 10px 6px; }
.dlg-body textarea { display: block; width: 100%; height: 205px; padding: 2px 8px; border: 3px solid #f2f2f2; border-top-color: #858585; border-left-color: #858585; outline: 0; resize: none; font-size: 20px; line-height: 24px; background: #fff; color: #1a1a1a; }
.caret { position: absolute; left: 634px; top: 10px; width: 1px; height: 24px; background: #000; }
.ok { width: 150px; margin: 9px auto 0 402px; }
.dlg-foot { display: flex; height: 23px; background: linear-gradient(#111 1px, #d2c7b6 2px 4px, #1c1813 6px, #8f8061 9px, #4b4230 15px, #1c1813 17px, #d2c7b6 18px 21px, #111); }
.foot-screw { flex: none; background: #6d6148; margin-top: -9px; }
.foot-rail { flex: 1; display: flex; justify-content: space-between; padding-top: 6px; }
```
FILE: map.js
```js
// Land is described by outlines and filled with 6px cells; odd rows shift by half a cell.
const CELL = 6, COLS = 170, ROWS = 57;
const west = { sx: 0.34435, sy: 1 / 3, dx: -9, dy: -9 };
const east = { sx: 1 / 3, sy: 1 / 3, dx: 521, dy: -9 };

const layers = [
  { sheet: west, fill: '#fff', shapes: [
    '20,20 320,20 320,90 355,130 400,190 470,240 460,270 430,280 430,295 370,300 355,330 285,362 240,378 220,388 220,415 285,420 315,410 345,390 365,410 345,470 310,540 240,620 200,650 180,695 150,715 150,830 165,880 175,960 115,1005 105,1045 20,1045',
    '340,20 345,65 375,70 370,100 430,100 440,82 460,112 540,125 605,120 620,150 670,215 725,208 735,290 745,370 790,460 810,505 850,440 850,345 920,290 970,220 1010,195 1065,190 1070,240 1100,280 1115,330 1160,315 1170,440 1250,400 1290,480 1330,470 1375,430 1375,330 1320,270 1310,215 1340,205 1460,210 1490,170 1550,120 1575,60 1575,20',
    '390,372 418,372 418,390 390,390',
    '840,450 870,480 880,515 850,530 838,490',
    '735,400 755,440 740,460', '710,510 735,490 725,560 740,610 725,620 708,550',
    '1070,350 1095,330 1080,390 1090,430 1070,420 1065,380', '1072,460 1090,460 1100,500 1085,500',
    '1120,510 1175,515 1200,560 1260,620 1310,660 1320,740 1480,765 1575,790 1575,850 1540,820 1480,805 1340,800 1290,780 1240,720 1180,640 1160,580 1125,545',
    '1165,650 1180,650 1215,730 1195,720',
    '1205,540 1260,555 1285,600 1265,625 1230,590',
    '1350,590 1390,625 1460,600 1515,640 1500,700 1465,735 1440,705 1380,690 1365,640',
    '1490,500 1540,420 1575,400 1575,430 1530,500 1490,570 1480,540',
    '1540,650 1575,620 1575,760 1555,740',
    '720,765 735,790 750,820 730,800 705,795',
    '425,750 455,765 450,785 415,780', '375,825 395,822 375,855 362,850',
    '215,875 260,905 255,928 220,905', '288,935 325,910 350,940 358,985 335,1000 350,1045 225,1045 240,1010 290,990'
  ], dots: '270,846 306,846 418,973 209,1009 1307,865 1186,900 1455,307 1473,452 1142,452 1412,470 1334,632 1352,704 1403,738 1219,758 1472,774' },
  { sheet: east, fill: '#fff', shapes: [
    '0,27 55,30 30,50 20,80 0,105',
    '45,195 65,195 65,310 80,345 100,340 130,385 130,450 138,490 120,540 100,590 85,540 80,490 60,460 50,430 5,430 0,380 25,370 20,300 15,250 30,220',
    '30,500 60,470 65,500 35,550 10,545', '0,610 90,600 80,640 30,650 60,690 50,720 20,700 30,770 5,740',
    '100,640 135,640 130,670 100,660', '160,700 200,690 220,730 240,770 200,750 170,720', '260,745 292,750 275,780',
    '140,630 165,588 190,630 240,640 285,665 290,640 370,645 400,680 440,675 470,700 520,720 530,770 520,800 560,820 600,820 605,850 540,850 500,830 440,800 410,820 345,815 370,790 350,740 290,725 260,700 200,680 185,650 150,640',
    '430,630 460,625 455,645 420,655', '560,665 625,680 645,705 665,750 715,785 745,800 750,840 705,822 650,750 600,735 590,765 550,765 530,740 570,750 590,720',
    '745,785 765,800 780,870 765,870', '860,900 885,905 900,940 912,1000 895,990 855,945',
    '960,570 1000,595 1025,650 1010,672 985,640', '1035,735 1060,735 1105,800 1095,820 1030,760',
    '1250,675 1268,690 1282,728 1228,725', '1195,725 1205,695 1220,705 1205,728',
    '1040,985 1080,985 1105,965 1130,970 1145,1035 1080,1035', '1215,895 1230,910 1290,910 1290,928 1215,925', '1220,800 1255,805 1260,835',
    '0,790 110,770 180,790 60,815 20,850 0,830',
    '30,1045 45,970 100,960 110,920 180,905 290,905 325,860 330,920 310,940 340,970 370,980 395,930 415,830 435,880 470,920 490,970 525,1010 525,1045'
  ], dots: '86,937 330,847 545,1027 590,973 796,1027 635,847 645,862 615,810 742,883 877,829 850,847 859,865 913,865 949,541 859,613 931,613 1048,667 1048,883 1175,883 1300,271 886,235 1147,38 1120,55 1174,55 1237,73 1282,91 1363,109 1372,127 1399,146 1435,146 1417,505 1183,612 1192,630 1255,865 1390,919 1129,901 1165,937 1192,955 1354,850 1363,865 1442,847 1399,1009 1282,1027 1217,1010 1208,1027 905,1027 472,343 508,667 130,703 256,740 1445,685 230,770 205,790 560,690' },
  { sheet: west, fill: '#38848c', shapes: [
    '60,65 97,65 97,110 130,180 142,210 190,315 195,340 225,400 280,385 290,410 225,425 205,400 190,360 165,330 110,235 105,190 80,130 50,100',
    '1200,370 1225,385 1240,420 1260,440 1290,480 1250,540 1215,470'
  ], dots: '' },
  { sheet: east, fill: '#38848c', shapes: ['60,455 95,455 95,475 60,480', '1105,1015 1122,1015 1122,1030 1105,1030'], dots: '86,468 350,700' },
  { sheet: west, fill: '#c0c0c0', shapes: [
    '97,313 165,316 200,352 208,385 165,352 88,350', '97,352 165,352 195,390 215,430 232,460 280,480 262,530 208,568 107,568 80,548 45,465',
    '340,390 365,410 345,470 310,540 240,620 200,650 182,672 185,580 262,530 282,482 310,478 330,420',
    '1170,226 1212,226 1225,280 1252,280 1260,262 1290,264 1298,310 1308,350 1250,352 1250,400 1210,375 1210,450 1225,520 1245,540 1195,525 1165,490 1170,440 1195,398 1160,300 1160,250',
    '1355,228 1410,226 1405,262 1355,255', '1495,27 1545,27 1540,45 1500,48', '1550,110 1575,100 1575,180 1550,150'
  ], dots: '1455,163 1447,181 1491,163 1527,127 1464,37' },
  { sheet: east, fill: '#c0c0c0', shapes: [
    '25,100 55,105 50,160 35,190 5,150', '70,120 95,105 110,108 100,132 68,135', '168,30 185,35 190,62 170,62 150,80 150,65',
    '475,460 515,460 515,494 445,494 445,480 475,478', '520,445 550,445 545,470 520,475', '345,425 382,425 382,440 345,440', '585,460 615,460 615,478 585,478',
    '475,172 490,175 498,240 480,240 465,200', '480,262 497,265 490,330 472,325', '412,40 435,70 420,100', '385,102 410,120 400,136',
    '840,390 868,390 865,405 830,425', '895,392 928,395 930,445 958,465 945,495 925,480 905,440', '840,445 885,462 880,475 850,475',
    '590,510 625,515 625,530 595,530', '735,515 768,515 768,530 735,530', '220,535 238,535 245,565 212,565'
  ], dots: '238,91 238,127 652,91 895,361 787,397 769,433 328,451 319,469 373,469 427,469 454,451 472,451 541,487 535,505 274,487 265,505 409,505 589,500 652,487 715,505 706,523 796,523 661,541 652,595 220,595 913,505 904,523' },
  { sheet: west, fill: '#cc79a7', shapes: [], dots: '819,145 941,145 898,235 854,289 1447,73 1377,145 1307,217 1228,559 1246,594' },
  { sheet: east, fill: '#cc79a7', shapes: [], dots: '76,343 373,1042' },
  { sheet: west, fill: '#00ff00', shapes: [], dots: '993,181 723,271 1455,55' },
  { sheet: west, fill: '#ff00ff', shapes: [], dots: '1115,181' },
  { sheet: west, fill: '#e69f00', shapes: [], dots: '1316,91 1246,127' }
];

const parse = (text, s) => text.trim().split(/\s+/).filter(Boolean).map(pair => {
  const [x, y] = pair.split(',').map(Number);
  return [x * s.sx + s.dx, y * s.sy + s.dy];
});

function inside(poly, x, y) {
  let hit = false;
  for (let i = 0, j = poly.length - 1; i < poly.length; j = i++) {
    const [xi, yi] = poly[i], [xj, yj] = poly[j];
    if ((yi > y) !== (yj > y) && x < (xj - xi) * (y - yi) / (yj - yi) + xi) hit = !hit;
  }
  return hit;
}

const land = document.getElementById('land');
for (const layer of layers) {
  const polys = layer.shapes.map(t => parse(t, layer.sheet));
  let d = '';
  for (let row = 0; row < ROWS; row++) {
    const y = row * CELL, off = row % 2 ? -CELL / 2 : 0;
    for (let col = 0; col < COLS; col++) {
      const x = col * CELL + off;
      if (polys.some(p => inside(p, x + 3, y + 3))) d += `M${x} ${y}h6v6h-6z`;
    }
  }
  for (const [px, py] of parse(layer.dots, layer.sheet)) {
    const row = Math.floor(py / CELL), off = row % 2 ? 3 : 0;
    d += `M${Math.floor((px - off) / CELL) * CELL + off} ${row * CELL}h6v6h-6z`;
  }
  const path = document.createElementNS('http://www.w3.org/2000/svg', 'path');
  path.setAttribute('d', d);
  path.setAttribute('fill', layer.fill);
  land.appendChild(path);
}
```
